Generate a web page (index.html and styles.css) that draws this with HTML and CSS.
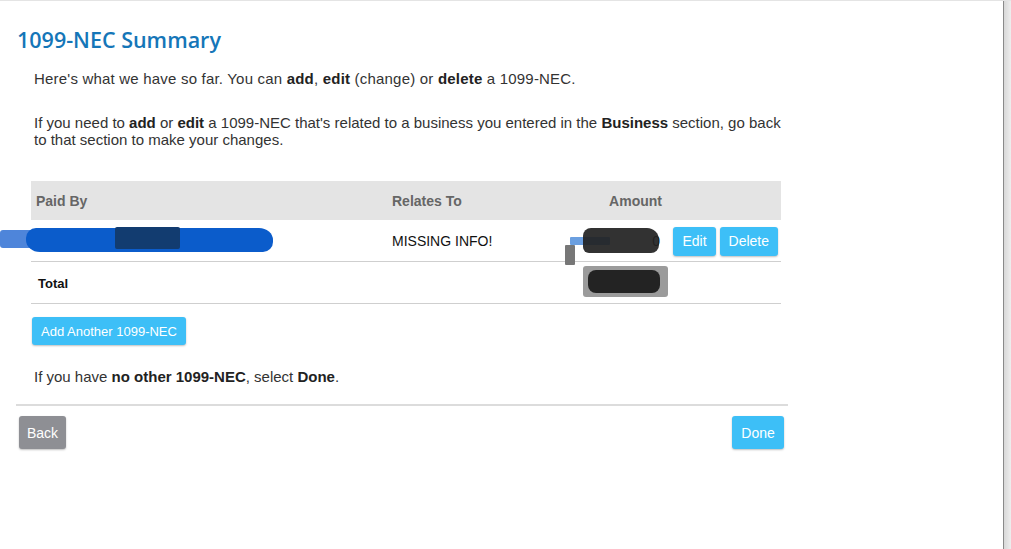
FILE: index.html
```html
<!DOCTYPE html>
<html>
<head>
<meta charset="utf-8">
<link rel="stylesheet" href="styles.css">
</head>
<body>
<div class="frame">
  <main class="page">
    <h1 class="title">1099-NEC Summary</h1>
    <p class="p1">Here's what we have so far. You can <b>add</b>, <b>edit</b> (change) or <b>delete</b> a 1099-NEC.</p>
    <p class="p2">If you need to <b>add</b> or <b>edit</b> a 1099-NEC that's related to a business you entered in the <b>Business</b> section, go back to that section to make your changes.</p>

    <div class="table">
      <div class="row head">
        <div class="c c1">Paid By</div>
        <div class="c c2">Relates To</div>
        <div class="c c3">Amount</div>
        <div class="c c4"></div>
      </div>
      <div class="row item">
        <div class="c c1 redact-cell">
          <span class="blob b-blue1"></span>
          <span class="blob b-blue3"></span>
          <span class="blob b-dark"></span>
        </div>
        <div class="c c2">MISSING INFO!</div>
        <div class="c c3 redact-cell">0
          <span class="blob a-blue"></span>
          <span class="blob a-grey"></span>
          <span class="blob a-dark"></span>
        </div>
        <div class="c c4 actions">
          <button class="btn">Edit</button>
          <button class="btn">Delete</button>
        </div>
      </div>
      <div class="row total">
        <div class="c c1">Total</div>
        <div class="c c2"></div>
        <div class="c c3 redact-cell">0
          <span class="blob t-grey"></span>
          <span class="blob t-dark"></span>
        </div>
        <div class="c c4"></div>
      </div>
    </div>

    <button class="btn add">Add Another 1099-NEC</button>
    <p class="p3">If you have <b>no other 1099-NEC</b>, select <b>Done</b>.</p>
    <hr class="rule">
    <div class="nav">
      <button class="btn back">Back</button>
      <button class="btn done">Done</button>
    </div>
  </main>
  <div class="edge"></div>
</div>
</body>
</html>
```
FILE: styles.css
```css
html, body {
  margin: 0;
  padding: 0;
  background: #fff;
}
body {
  font-family: "Liberation Sans", Arial, sans-serif;
  font-size: 15px;
  color: #333;
}
.frame {
  display: flex;
  height: 549px;
  border-top: 1px solid #e4e4e4;
  box-sizing: border-box;
}
.page {
  width: 772px;
  margin-left: 16px;
  padding-top: 26px;
}
.edge {
  margin-left: auto;
  width: 7px;
  border-left: 1px solid #8a8a8a;
  background: linear-gradient(to right, #d8d8d8, #eeeeee);
}
.title {
  margin: 0;
  padding-left: 1px;
  font-family: "Open Sans", "Segoe UI", sans-serif;
  font-weight: 600;
  font-size: 21.5px;
  line-height: 25px;
  color: #1576b8;
}
.p1, .p2, .p3 {
  margin: 0;
  padding-left: 18px;
  line-height: 17px;
}
.p1 { margin-top: 18px; letter-spacing: 0.2px; }
.p2 { margin-top: 27px; }
b { color: #222; }

.table {
  margin-top: 33px;
  margin-left: 15px;
  width: 750px;
  font-size: 14px;
}
.row {
  display: grid;
  grid-template-columns: 356px 200px 79px 115px;
  align-items: center;
}
.head {
  background: #e4e4e4;
  height: 39px;
  font-weight: bold;
  color: #666;
  margin-bottom: 1px;
}
.item {
  height: 40px;
  border-bottom: 1px solid #cfcfcf;
  color: #111;
}
.total {
  height: 41px;
  border-bottom: 1px solid #cfcfcf;
  font-size: 13px;
  font-weight: bold;
  color: #111;
}
.c1 { padding-left: 5px; }
.total .c1 { padding-left: 7px; padding-top: 2px; }
.c2 { padding-left: 5px; }
.c3 { text-align: right; padding-right: 6px; }
.head .c3 { padding-right: 4px; }
.actions {
  display: flex;
  gap: 4px;
  justify-content: flex-end;
  padding-right: 3px;
}
.btn {
  font-family: "Liberation Sans", Arial, sans-serif;
  font-size: 14px;
  color: #fff;
  background: #3dbff7;
  border: none;
  border-radius: 3px;
  box-shadow: 0 1px 2px rgba(0,0,0,0.25);
  padding: 0 8px;
  height: 29px;
  cursor: pointer;
}
.actions .btn { padding: 0 9px; }
.add {
  margin-top: 13px;
  margin-left: 16px;
  height: 28px;
  font-size: 13px;
  padding: 0 8px;
  width: 154px;
}
.p3 { margin-top: 23px; }
.rule {
  margin: 19px 0 0 0;
  border: none;
  height: 2px;
  background: #dcdcdc;
}
.nav {
  display: flex;
  justify-content: space-between;
  margin-top: 10px;
  padding-left: 3px;
  padding-right: 4px;
}
.nav .btn { height: 33px; }
.back { background: #8e8f94; width: 47px; padding: 0; }
.done { width: 52px; padding: 0; }

.redact-cell {
  position: relative;
  align-self: stretch;
  display: flex;
  align-items: center;
}
.c3.redact-cell { justify-content: flex-end; }
.blob {
  position: absolute;
  display: block;
}
.b-blue1 { left: -31px; top: 9px; width: 130px; height: 18px; background: #3b78d6; border-radius: 3px 8px 8px 3px; opacity: 0.9; }
.b-blue3 { left: -5px; top: 7px; width: 247px; height: 24px; background: #0b5ccb; border-radius: 10px 14px 10px 14px / 10px 12px 10px 12px; }
.b-dark { left: 84px; top: 6px; width: 65px; height: 22px; background: #123c70; border-radius: 2px; }
.a-blue { left: -17px; top: 16px; width: 40px; height: 8px; background: #6b9fe0; border-radius: 1px; }
.a-grey { left: -22px; top: 24px; width: 10px; height: 20px; background: #777; border-radius: 1px; }
.a-dark { left: -4px; top: 7px; width: 76px; height: 25px; background: #222; border-radius: 8px 12px 8px 6px; opacity: 0.93; }
.t-grey { left: -4px; top: 4px; width: 85px; height: 31px; background: #8a8a8a; border-radius: 3px; opacity: 0.85; }
.t-dark { left: 1px; top: 8px; width: 72px; height: 23px; background: #232323; border-radius: 8px; }
```
